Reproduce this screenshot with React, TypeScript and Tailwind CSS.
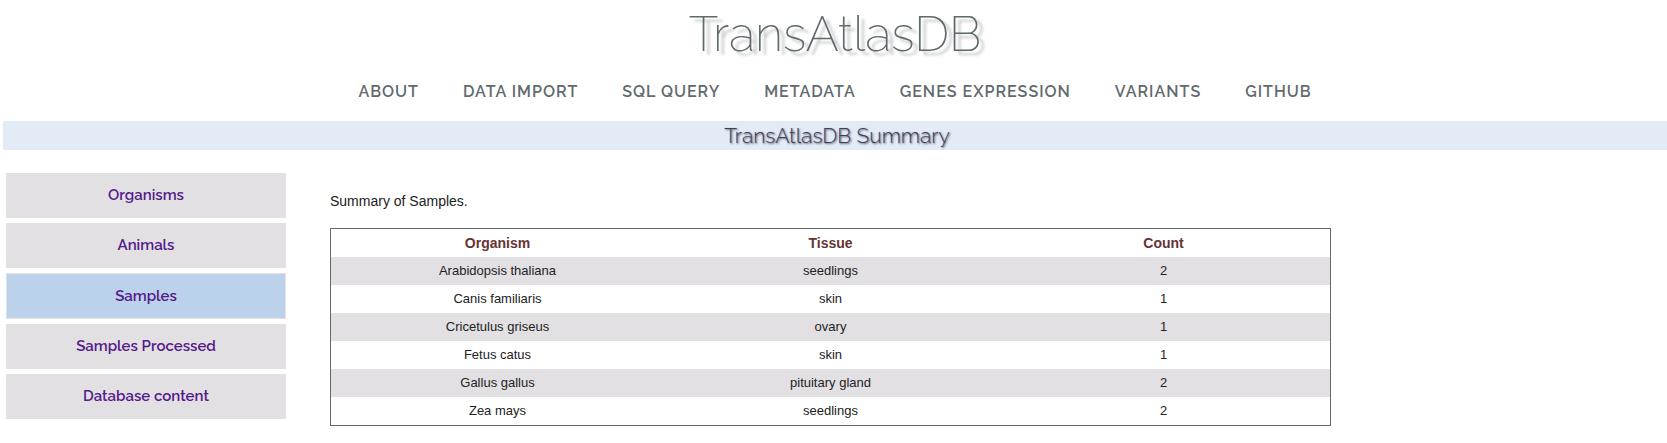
const navLinks = [
  "About",
  "Data Import",
  "SQL Query",
  "Metadata",
  "Genes Expression",
  "Variants",
  "GitHub",
];

const sections = [
  "Organisms",
  "Animals",
  "Samples",
  "Samples Processed",
  "Database content",
];

const columns = ["Organism", "Tissue", "Count"];

const samples = [
  { organism: "Arabidopsis thaliana", tissue: "seedlings", count: 2 },
  { organism: "Canis familiaris", tissue: "skin", count: 1 },
  { organism: "Cricetulus griseus", tissue: "ovary", count: 1 },
  { organism: "Fetus catus", tissue: "skin", count: 1 },
  { organism: "Gallus gallus", tissue: "pituitary gland", count: 2 },
  { organism: "Zea mays", tissue: "seedlings", count: 2 },
];

function Header() {
  return (
    <header className="flex flex-col items-center pt-1">
      <h1 className="text-[49px] leading-[60px] font-extralight text-[#5f6a6d] [text-shadow:5px_4px_3px_#bbbbbb]">
        TransAtlasDB
      </h1>
      <nav className="flex flex-wrap justify-center gap-x-11 pt-[18px] pb-[19px]">
        {navLinks.map((label) => (
          <a
            key={label}
            href="#"
            className="text-[16px] leading-5 font-semibold tracking-[1px] text-[#5f6a6d] uppercase"
          >
            {label}
          </a>
        ))}
      </nav>
    </header>
  );
}

function Sidebar({ active }: { active: string }) {
  return (
    <nav className="flex w-[280px] shrink-0 flex-col gap-[5px]">
      {sections.map((label) => (
        <a
          key={label}
          href="#"
          className={`flex items-center justify-center border border-[#e2e0e3] text-[15px] font-semibold text-[#551a8b] ${
            label === active ? "h-[46px] bg-[#bcd2ea]" : "h-[45px] bg-[#e2e0e3]"
          }`}
        >
          {label}
        </a>
      ))}
    </nav>
  );
}

function SamplesTable() {
  return (
    <div className="w-full max-w-[1001px] border border-[#5f6a6d]">
      <table className="w-full table-fixed border-collapse text-center">
        <thead>
          <tr className="h-7">
            {columns.map((column) => (
              <th key={column} scope="col" className="p-0 text-[14px] leading-5 font-bold text-[#663333]">
                {column}
              </th>
            ))}
          </tr>
        </thead>
        <tbody>
          {samples.map((row) => (
            <tr key={row.organism} className="h-7 text-[13px] leading-5 text-[#222222] odd:bg-[#e2e0e3]">
              <td className="p-0">{row.organism}</td>
              <td className="p-0">{row.tissue}</td>
              <td className="p-0">{row.count}</td>
            </tr>
          ))}
        </tbody>
      </table>
    </div>
  );
}

export default function App() {
  return (
    <div className="bg-white pl-[3px] font-[Raleway,Lato,sans-serif]">
      <Header />
      <h2 className="bg-[#e3ebf6] pl-1 text-center text-[21px] leading-[29px] font-light text-[#3f3f66] [text-shadow:1px_1px_2px_#555555]">
        TransAtlasDB Summary
      </h2>
      <div className="flex gap-11 px-[3px] pt-[23px]">
        <Sidebar active="Samples" />
        <main className="min-w-0 grow font-['Liberation_Sans',Arial,sans-serif]">
          <p className="pt-[18px] pb-[17px] text-[14px] leading-5 text-[#222222]">Summary of Samples.</p>
          <SamplesTable />
        </main>
      </div>
    </div>
  );
}
